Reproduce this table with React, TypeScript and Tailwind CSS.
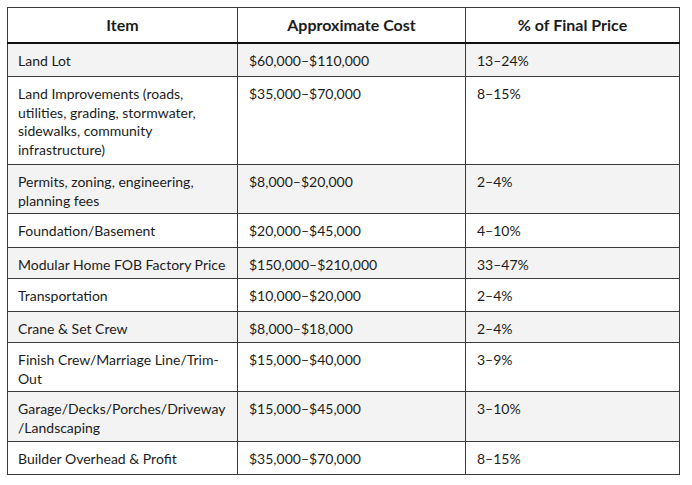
type Row = {
  item: string[];
  cost: string;
  pct: string;
  h: string;
};

const rows: Row[] = [
  { item: ['Land Lot'], cost: '$60,000–$110,000', pct: '13–24%', h: 'h-[34px]' },
  {
    item: ['Land Improvements (roads,', 'utilities, grading, stormwater,', 'sidewalks, community', 'infrastructure)'],
    cost: '$35,000–$70,000',
    pct: '8–15%',
    h: 'h-[88px]',
  },
  { item: ['Permits, zoning, engineering,', 'planning fees'], cost: '$8,000–$20,000', pct: '2–4%', h: 'h-[49px]' },
  { item: ['Foundation/Basement'], cost: '$20,000–$45,000', pct: '4–10%', h: 'h-[34px]' },
  { item: ['Modular Home FOB Factory Price'], cost: '$150,000–$210,000', pct: '33–47%', h: 'h-[31px]' },
  { item: ['Transportation'], cost: '$10,000–$20,000', pct: '2–4%', h: 'h-[33px]' },
  { item: ['Crane & Set Crew'], cost: '$8,000–$18,000', pct: '2–4%', h: 'h-[31px]' },
  { item: ['Finish Crew/Marriage Line/Trim-', 'Out'], cost: '$15,000–$40,000', pct: '3–9%', h: 'h-[49px]' },
  { item: ['Garage/Decks/Porches/Driveway', '/Landscaping'], cost: '$15,000–$45,000', pct: '3–10%', h: 'h-[50px]' },
  { item: ['Builder Overhead & Profit'], cost: '$35,000–$70,000', pct: '8–15%', h: 'h-[33px]' },
];

export default function App() {
  return (
    <div className="min-h-screen bg-white pt-[7px] pl-[7px] font-['Lato','Liberation_Sans',sans-serif] text-[#1c1c1c]">
      <table className="w-[672px] table-fixed border-collapse border border-[#3a3a3a]">
        <colgroup>
          <col className="w-[230px]" />
          <col className="w-[228px]" />
          <col className="w-[214px]" />
        </colgroup>
        <thead>
          <tr className="h-[35px] border-b-2 border-[#111]">
            <th className="border-r border-[#3a3a3a] text-center text-[16px] font-bold">Item</th>
            <th className="border-r border-[#3a3a3a] text-center text-[16px] font-bold">Approximate Cost</th>
            <th className="text-center text-[16px] font-bold">% of Final Price</th>
          </tr>
        </thead>
        <tbody>
          {rows.map((r, i) => (
            <tr key={r.cost + i} className={`${r.h} border-b border-[#3a3a3a] ${i % 2 === 0 ? 'bg-[#f3f3f3]' : 'bg-white'}`}>
              <td className="border-r border-[#3a3a3a] pl-[10px] pr-1 pt-[8px] align-top whitespace-nowrap text-[14px] leading-[18.5px]">
                {r.item.map((line) => (
                  <div key={line}>{line}</div>
                ))}
              </td>
              <td className="border-r border-[#3a3a3a] px-[11px] pt-[8px] align-top text-[14px] leading-[18.5px]">
                {r.cost}
              </td>
              <td className="px-[11px] pt-[8px] align-top text-[14px] leading-[18.5px]">{r.pct}</td>
            </tr>
          ))}
        </tbody>
      </table>
    </div>
  );
}
